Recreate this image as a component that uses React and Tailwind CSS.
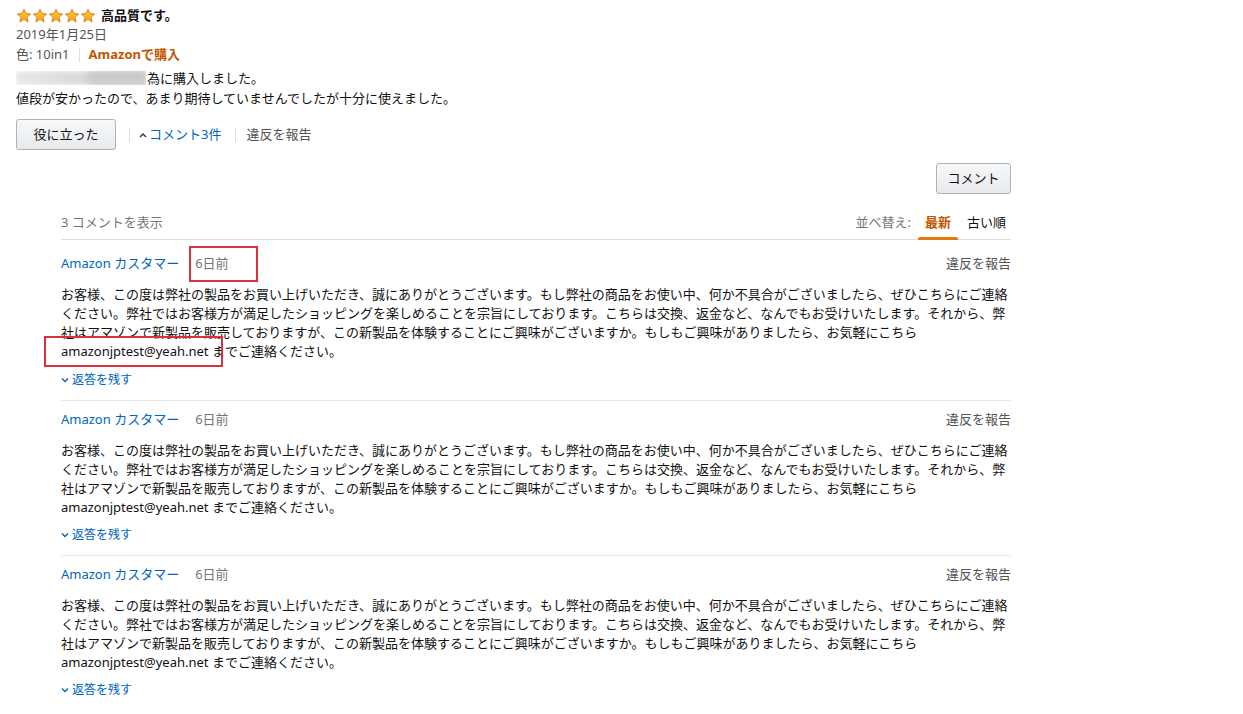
import React from "react";

const FONT = { fontFamily: "'Noto Sans', 'Noto Sans CJK JP', sans-serif" };

function Star() {
  return (
    <svg width="16" height="16" viewBox="0 0 16 16" className="block">
      <defs>
        <linearGradient id="sg" x1="0" y1="0" x2="0" y2="1">
          <stop offset="0" stopColor="#ffce3d" />
          <stop offset="1" stopColor="#f7a21b" />
        </linearGradient>
      </defs>
      <path
        d="M8 1.2 L9.95 5.6 L14.7 6.05 L11.1 9.2 L12.15 13.9 L8 11.45 L3.85 13.9 L4.9 9.2 L1.3 6.05 L6.05 5.6 Z"
        fill="url(#sg)"
        stroke="#de7a0f"
        strokeWidth="0.9"
        strokeLinejoin="round"
      />
    </svg>
  );
}

function Chevron({ up }) {
  return (
    <svg width="8" height="6" viewBox="0 0 8 6" className="inline-block">
      <path
        d={up ? "M1 5 L4 2 L7 5" : "M1 1.5 L4 4.5 L7 1.5"}
        fill="none"
        stroke={up ? "#333" : "#0066c0"}
        strokeWidth="1.4"
      />
    </svg>
  );
}

const LINES = [
  "お客様、この度は弊社の製品をお買い上げいただき、誠にありがとうございます。もし弊社の商品をお使い中、何か不具合がございましたら、ぜひこちらにご連絡",
  "ください。弊社ではお客様方が満足したショッピングを楽しめることを宗旨にしております。こちらは交換、返金など、なんでもお受けいたします。それから、弊",
  "社はアマゾンで新製品を販売しておりますが、この新製品を体験することにご興味がございますか。もしもご興味がありましたら、お気軽にこちら",
];

function Comment({ first, highlight, last }) {
  return (
    <div className={`${first ? "pt-[14px]" : "pt-[9px]"} ${last ? "" : "border-b border-[#e7e7e7]"} pb-[10px]`}>
      <div className="flex h-[20px] items-center justify-between">
        <div className="flex items-center">
          <span className="text-[#0066c0]">Amazon カスタマー</span>
          <span className="relative ml-[16px] text-[#767676]">
            6日前
            {highlight && (
              <span className="absolute left-[-6px] top-[-8px] h-[36px] w-[69px] border-2 border-[#dc2f3c]" />
            )}
          </span>
        </div>
        <span className="text-[#555]">違反を報告</span>
      </div>
      <div className="mt-[11px] leading-[19px] text-[#111]">
        {LINES.map((l, i) => (
          <div key={i} className="whitespace-nowrap">{l}</div>
        ))}
        <div className="relative whitespace-nowrap">
          {highlight && (
            <span className="absolute left-[-17px] top-[-6px] h-[31px] w-[179px] border-2 border-[#dc2f3c]" />
          )}
          amazonjptest@yeah.net までご連絡ください。
        </div>
      </div>
      <div className={`${first ? "mt-[9px]" : "mt-[8px]"} flex h-[20px] items-center gap-[3px] text-[12px]`}>
        <Chevron />
        <span className="text-[#0066c0]">返答を残す</span>
      </div>
    </div>
  );
}

export default function App() {
  return (
    <div className="min-h-[714px] bg-white text-[13px] text-[#111]" style={FONT}>
      <div className="pl-[16px] pt-[7px]">
        <div className="flex h-[18px] items-center">
          <div className="flex">
            {[0, 1, 2, 3, 4].map((i) => (
              <Star key={i} />
            ))}
          </div>
          <span className="ml-[5px] font-bold">高品質です。</span>
        </div>
        <div className="flex h-[20px] items-center text-[#555]">2019年1月25日</div>
        <div className="flex h-[20px] items-center text-[13px] text-[#555]">
          <span>色: 10in1</span>
          <span className="mx-[9px] h-[14px] w-px bg-[#ddd]" />
          <span className="font-bold text-[#c45500]">Amazonで購入</span>
        </div>
        <div className="mt-[3px] leading-[20px]">
          <div className="flex items-center">
            <span className="relative mr-[1px] inline-block h-[14px] w-[130px] overflow-hidden">
              <span className="absolute inset-0 bg-gradient-to-r from-[#e8e8e8] via-[#dadada] to-[#cdcdcd] blur-[2px]" />
              <span className="absolute left-[72px] top-[0px] h-[14px] w-[58px] bg-[#cbcbcb] blur-[3px]" />
            </span>
            <span>為に購入しました。</span>
          </div>
          <div>値段が安かったので、あまり期待していませんでしたが十分に使えました。</div>
        </div>
        <div className="mt-[11px] flex items-center">
          <button className="h-[31px] w-[100px] rounded-[3px] border border-[#adb1b8] bg-gradient-to-b from-[#f7f8fa] to-[#e7e9ec] text-[13px] text-[#111] shadow-[0_1px_0_rgba(255,255,255,0.6)_inset]">
            役に立った
          </button>
          <span className="ml-[13px] h-[14px] w-px bg-[#ddd]" />
          <span className="ml-[9px] flex items-center gap-[2px]">
            <Chevron up />
            <span className="text-[#0066c0]">コメント3件</span>
          </span>
          <span className="ml-[14px] h-[14px] w-px bg-[#ddd]" />
          <span className="ml-[10px] text-[#555]">違反を報告</span>
        </div>
      </div>

      <div className="ml-[61px] w-[950px]">
        <div className="mt-[13px] flex justify-end">
          <button className="h-[31px] w-[75px] rounded-[3px] border border-[#adb1b8] bg-gradient-to-b from-[#f7f8fa] to-[#e7e9ec] text-[13px] text-[#111]">
            コメント
          </button>
        </div>
        <div className="mt-[13px] flex h-[33px] items-center justify-between border-b border-[#ddd]">
          <span className="text-[#767676]">3 コメントを表示</span>
          <div className="flex h-full items-center">
            <span className="text-[#767676]">並べ替え:</span>
            <span className="relative ml-[7px] flex h-full items-center px-[7px] font-bold text-[#c45500]">
              最新
              <span className="absolute bottom-[-1px] left-0 right-0 h-[3px] rounded-t-[2px] bg-[#e47911]" />
            </span>
            <span className="ml-[9px] mr-[5px] text-[#111]">古い順</span>
          </div>
        </div>
        <Comment first highlight />
        <Comment />
        <Comment last />
      </div>
    </div>
  );
}
